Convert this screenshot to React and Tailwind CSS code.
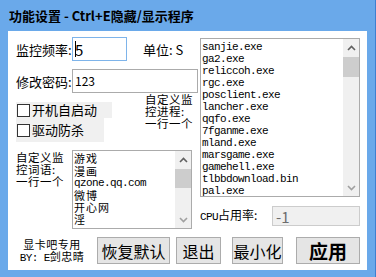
import React from "react";

const procs = [
  "sanjie.exe",
  "ga2.exe",
  "reliccoh.exe",
  "rgc.exe",
  "posclient.exe",
  "lancher.exe",
  "qqfo.exe",
  "7fganme.exe",
  "mland.exe",
  "marsgame.exe",
  "gamehell.exe",
  "tlbbdownload.bin",
  "pal.exe",
];

function Up() {
  return (
    <svg width="9" height="6" viewBox="0 0 9 6" className="block">
      <path d="M1 5 L4.5 1.5 L8 5" stroke="#606060" strokeWidth="1.6" fill="none" />
    </svg>
  );
}
function Down() {
  return (
    <svg width="9" height="6" viewBox="0 0 9 6" className="block">
      <path d="M1 1 L4.5 4.5 L8 1" stroke="#a0a0a0" strokeWidth="1.6" fill="none" />
    </svg>
  );
}

function Scrollbar({ thumbTop, thumbH }) {
  return (
    <div className="w-[16px] h-full bg-[#f0f0f0] flex flex-col items-center shrink-0">
      <div className="h-[17px] flex items-center justify-center">
        <Up />
      </div>
      <div className="flex-1 w-full flex flex-col">
        <div style={{ height: thumbTop }} />
        <div className="w-full bg-[#cdcdcd]" style={{ height: thumbH }} />
      </div>
      <div className="h-[17px] flex items-center justify-center">
        <Down />
      </div>
    </div>
  );
}

function Check({ label, h, w }) {
  return (
    <div className={`flex items-center bg-[#f0f0f0] ${h} ${w}`}>
      <div className="ml-[1px] w-[13px] h-[13px] border border-[#333] bg-white" />
      <span className="ml-[2px] text-[13px] leading-[14px] text-black">{label}</span>
    </div>
  );
}

export default function App() {
  const mono = "font-['Liberation_Mono','Noto_Sans_CJK_SC',monospace]";
  return (
    <div className="w-[376px] h-[277px] bg-[#6aa9ea] border-r border-[#3f7fcf] flex flex-col font-['Noto_Sans_CJK_SC',sans-serif] text-black overflow-hidden">
      <div className="h-[31px] pl-[9px] flex items-center text-[13px] font-bold leading-none">
        功能设置 - Ctrl+E隐藏/显示程序
      </div>
      <div className="ml-[8px] w-[359px] h-[239px] bg-white pl-[8px] pt-[6px]">
        <div className="flex">
          {/* left column */}
          <div className="w-[184px] flex flex-col">
            <div className="h-[24px] flex items-center">
              <span className="w-[56px] text-[13px] leading-none">监控频率:</span>
              <div className="w-[55px] h-[24px] border border-[#7eb4ea] flex items-center pl-[2px]">
                <div className="w-[1px] h-[16px] bg-black" />
                <span className="text-[15px] leading-none -ml-[1px]">5</span>
              </div>
              <span className="ml-[16px] text-[13px] leading-none">单位: S</span>
            </div>
            <div className="mt-[8px] h-[24px] flex items-center">
              <span className="w-[56px] text-[13px] leading-none">修改密码:</span>
              <div className="w-[126px] h-[24px] border border-[#ababab] flex items-center pl-[2px]">
                <span className="text-[12px] leading-none">123</span>
              </div>
            </div>
            <div className="h-[57px] flex items-start">
              <div className="mt-[9px] flex flex-col">
                <Check label="开机自启动" h="h-[16px]" w="w-[96px]" />
                <Check label="驱动防杀" h="h-[24px]" w="w-[88px]" />
              </div>
              <div className="ml-[33px] w-[48px] text-[11.5px] leading-[12px] tracking-[0.5px]">
                <div>自定义监</div>
                <div>控进程:</div>
                <div>一行一个</div>
              </div>
            </div>
            <div className="h-[79px] flex items-start">
              <div className="w-[56px] text-[11.5px] leading-[12px] tracking-[0.5px] pt-[1px]">
                <div>自定义监</div>
                <div>控词语:</div>
                <div>一行一个</div>
              </div>
              <div className="w-[120px] h-[79px] border border-[#ababab] flex">
                <div className="flex-1 pl-[1px] pt-[1px] text-[11px] leading-[12px] tracking-[1px]">
                  <div className="h-[13px]">游戏</div>
                  <div className="h-[13px]">漫画</div>
                  <div className={`h-[11px] text-[11px] leading-[11px] tracking-[-0.6px] ${mono}`}>qzone.qq.com</div>
                  <div className="h-[12px]">微博</div>
                  <div className="h-[12px]">开心网</div>
                  <div className="h-[12px]">淫</div>
                </div>
                <Scrollbar thumbTop={1} thumbH={19} />
              </div>
            </div>
          </div>
          {/* right column */}
          <div className="w-[160px] flex flex-col">
            <div className="mt-[1px] w-[160px] h-[159px] border border-[#ababab] flex">
              <div className={`flex-1 pl-[1px] pt-[2px] overflow-hidden text-[11px] leading-[12px] tracking-[-0.6px] ${mono}`}>
                {procs.map((p) => (
                  <div key={p} className="h-[12px] whitespace-nowrap">{p}</div>
                ))}
              </div>
              <Scrollbar thumbTop={1} thumbH={20} />
            </div>
            <div className="mt-[9px] h-[20px] flex items-center">
              <span className="w-[72px] text-[12px] leading-none">
                <span className={`${mono} text-[11px] tracking-[-0.6px]`}>CPU</span>占用率:
              </span>
              <div className="w-[88px] h-[20px] border border-[#cccccc] bg-[#f0f0f0] flex items-center pl-[3px]">
                <span className="text-[15px] leading-none text-[#6d6d6d]">-1</span>
              </div>
            </div>
          </div>
        </div>
        {/* bottom row */}
        <div className="mt-[8px] h-[27px] flex items-center">
          <div className="w-[72px] flex flex-col items-center text-[11px] leading-[12px] tracking-[0.5px]">
            <span>显卡吧专用</span>
            <span>
              <span className={`${mono} text-[11px] tracking-[-0.6px]`}>BY: E</span>剑忠晴
            </span>
          </div>
          <button className="ml-[9px] w-[73px] h-[27px] bg-[#e5e5e5] border border-[#acacac] text-[16px] leading-none">
            恢复默认
          </button>
          <button className="ml-[6px] w-[45px] h-[27px] bg-[#e5e5e5] border border-[#acacac] text-[16px] leading-none">
            退出
          </button>
          <button className="ml-[11px] w-[51px] h-[27px] bg-[#e5e5e5] border border-[#acacac] text-[16px] leading-none">
            最小化
          </button>
          <button className="ml-[13px] w-[64px] h-[27px] bg-[#e5e5e5] border border-[#acacac] text-[19px] font-bold leading-none">
            应用
          </button>
        </div>
      </div>
    </div>
  );
}
